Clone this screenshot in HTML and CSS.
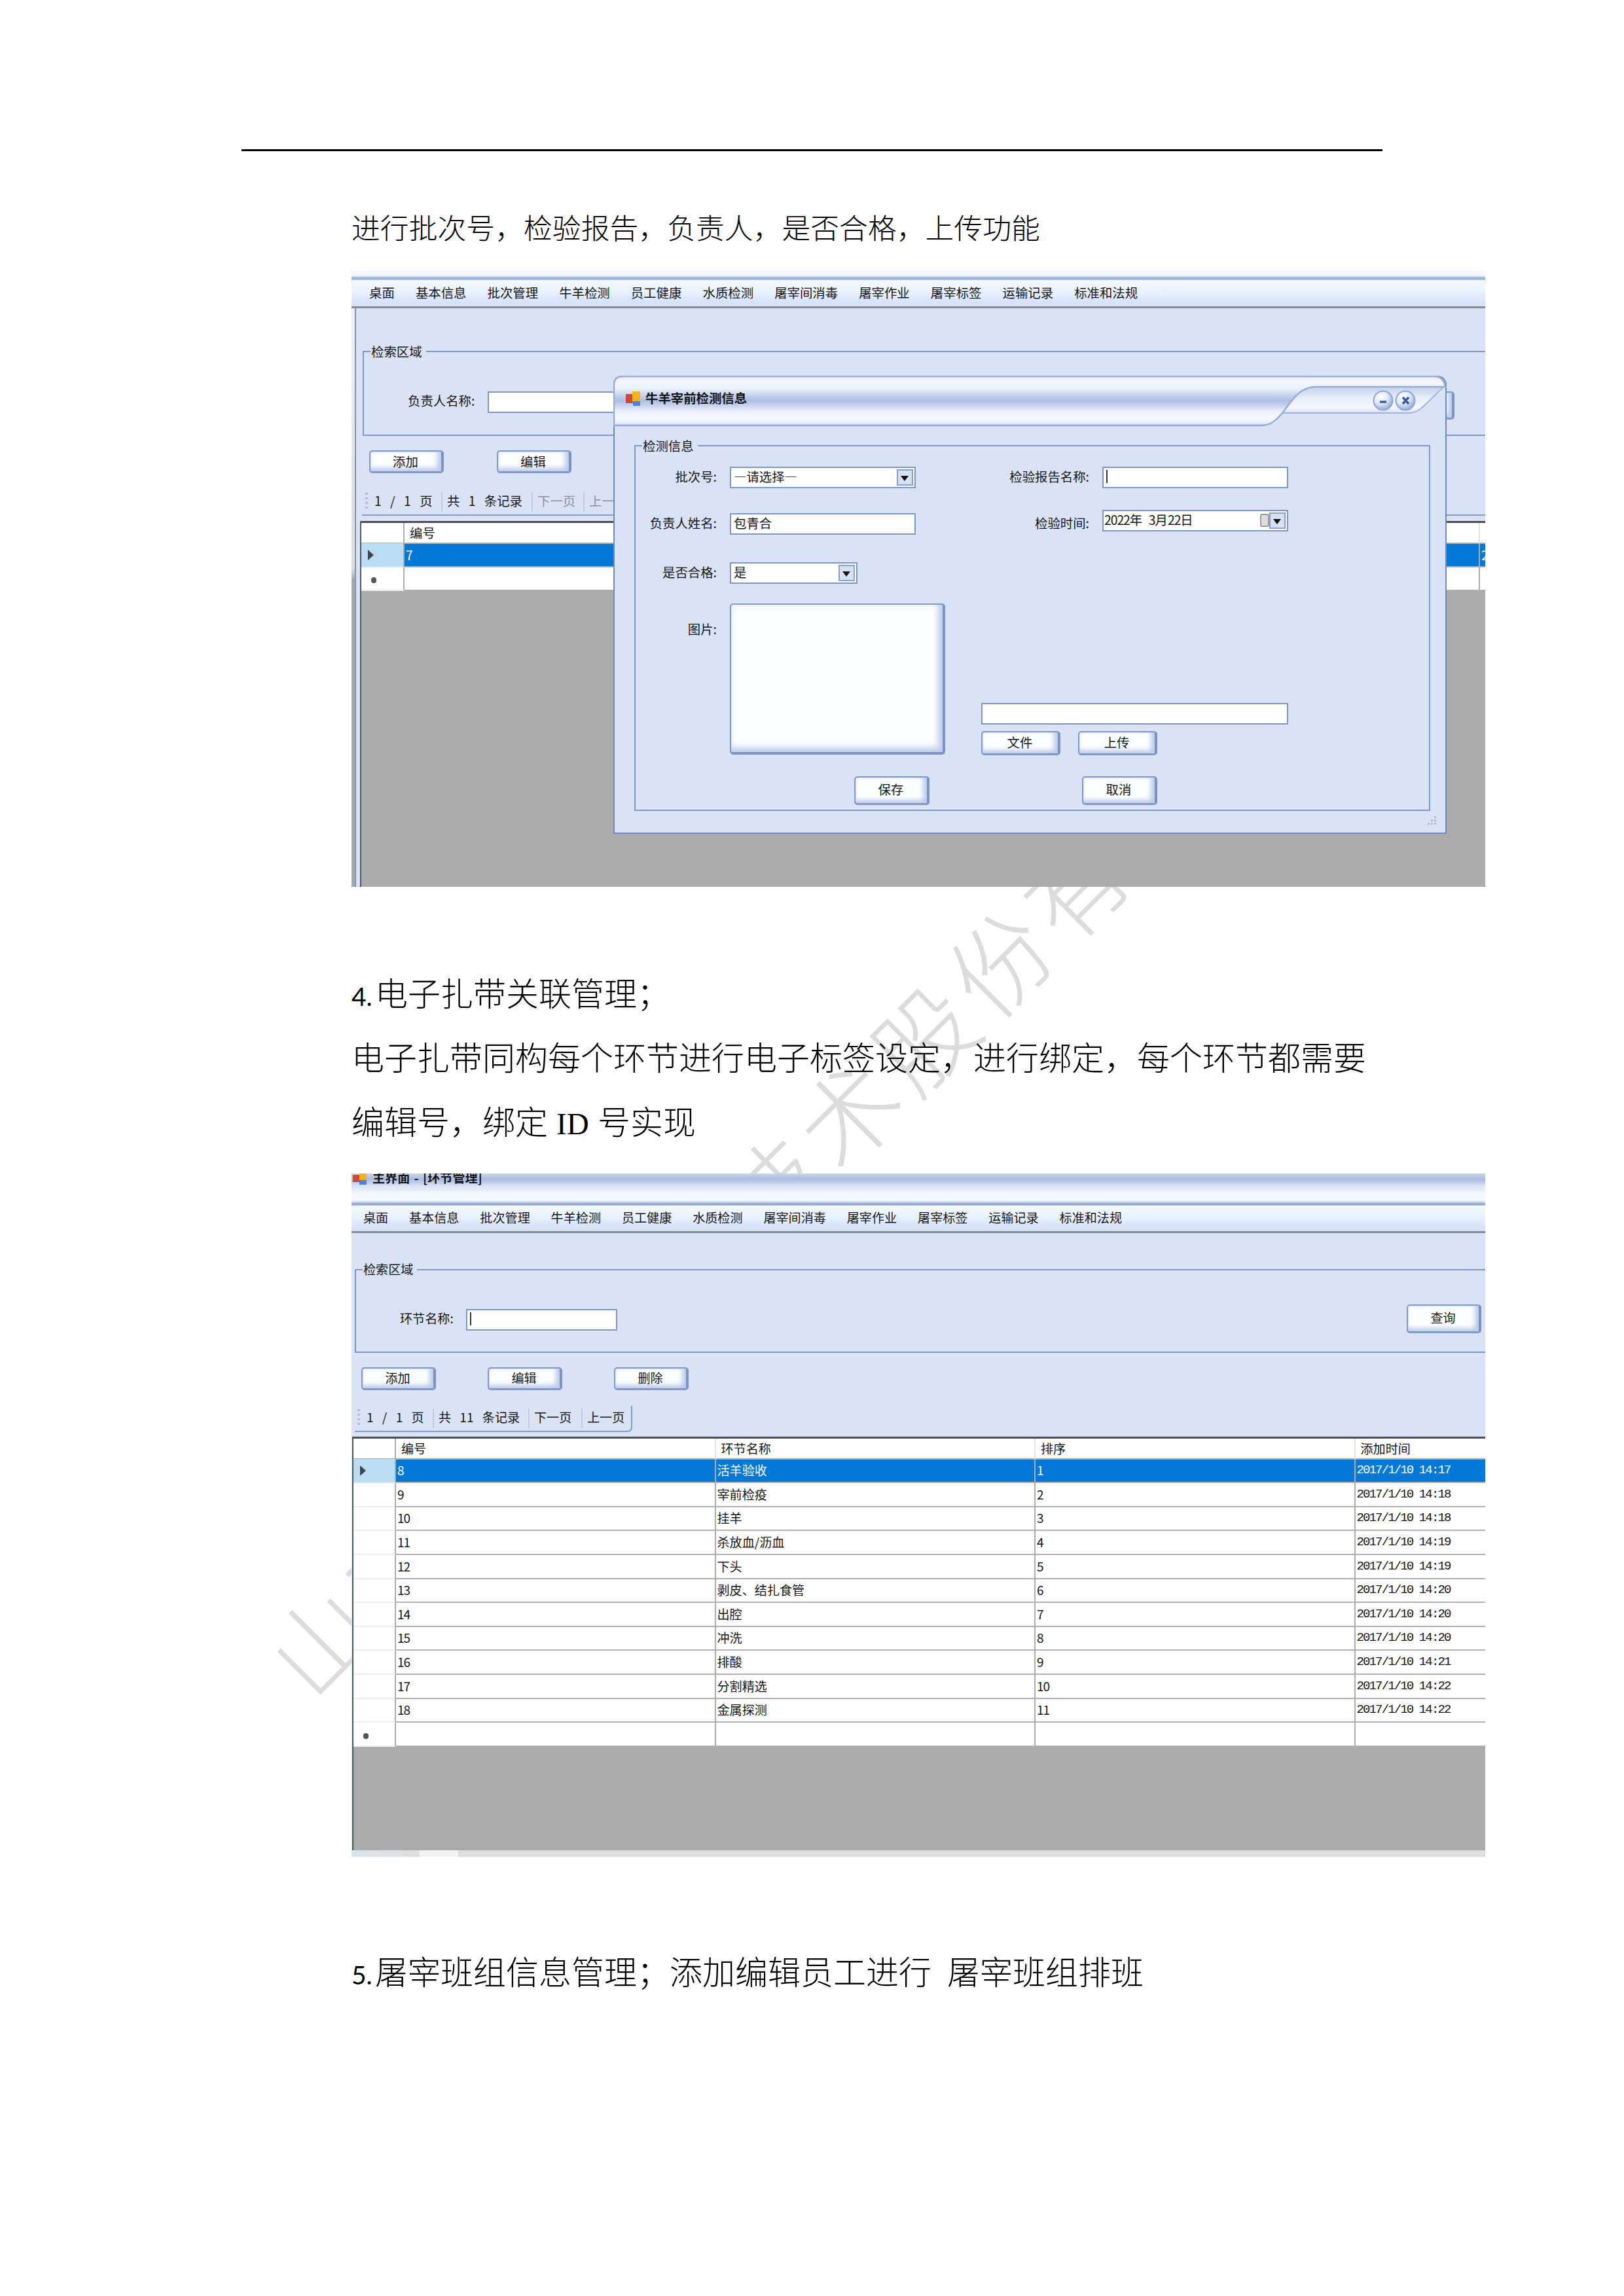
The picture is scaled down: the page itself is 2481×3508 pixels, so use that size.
FILE: index.html
```html
<!DOCTYPE html>
<html lang="zh-CN">
<head>
<meta charset="utf-8">
<title>检测与环节管理</title>
<link rel="stylesheet" href="styles.css">
</head>
<body>
<div class="watermark" aria-hidden="true"><span>山</span><span>东</span><span class="gap"></span><span>技</span><span>术</span><span>股</span><span>份</span><span>有</span></div>
<div class="rule"></div>
<main class="doc">
  <p class="small">进行批次号，检验报告，负责人，是否合格，上传功能</p>

  <section class="shot shot-a">
    <div class="topstrip"></div>
    <nav class="menu"><span>桌面</span><span>基本信息</span><span>批次管理</span><span>牛羊检测</span><span>员工健康</span><span>水质检测</span><span>屠宰间消毒</span><span>屠宰作业</span><span>屠宰标签</span><span>运输记录</span><span>标准和法规</span></nav>
    <div class="frame">
      <div class="edge"></div>
      <div class="work">
        <fieldset class="search">
          <legend>检索区域</legend>
          <div class="line"><span class="lab">负责人名称:</span><div class="input"></div><div class="btn query"></div></div>
        </fieldset>
        <div class="tools"><div class="btn">添加</div><div class="btn">编辑</div></div>
        <div class="pager"><i class="grip"></i><span class="p1">1 / 1 页</span><span class="p2">共 1 条记录</span><span class="p3 off">下一页</span><span class="p4 off">上一页</span></div>
        <div class="grid">
          <div class="row head"><b></b><span>编号</span><span></span></div>
          <div class="row sel"><b><svg width="9" height="16"><path d="M0 0L9 8L0 16Z" fill="#444"/></svg></b><span class="n">7</span><span class="n">2</span></div>
          <div class="row"><b><i class="dot"></i></b><span></span><span></span></div>
        </div>
      </div>
    </div>

    <div class="dialog">
      <svg class="titlebar" width="1273" height="78" viewBox="0 0 1273 78">
        <defs>
          <linearGradient id="bar" x1="0" y1="0" x2="0" y2="1">
            <stop offset="0" stop-color="#dfe7f6"/><stop offset=".08" stop-color="#f3f6fd"/><stop offset=".24" stop-color="#eef3fc"/>
            <stop offset=".38" stop-color="#c8d5ee"/><stop offset=".49" stop-color="#abbee4"/><stop offset=".58" stop-color="#c3d0ec"/>
            <stop offset=".7" stop-color="#e9eefa"/><stop offset=".85" stop-color="#f6f9fe"/><stop offset=".95" stop-color="#e9eef9"/><stop offset="1" stop-color="#c4d0ea"/>
          </linearGradient>
          <linearGradient id="pan" x1="0" y1="0" x2="0" y2="1">
            <stop offset="0" stop-color="#c3d1ec"/><stop offset=".4" stop-color="#e6ecf9"/><stop offset=".8" stop-color="#f5f8fe"/><stop offset="1" stop-color="#d5dff3"/>
          </linearGradient>
          <radialGradient id="orb" cx=".38" cy=".32" r=".72">
            <stop offset="0" stop-color="#fff"/><stop offset=".5" stop-color="#dfe8f7"/><stop offset="1" stop-color="#8fa8d4"/>
          </radialGradient>
        </defs>
        <path d="M1022 57H1216C1234 57 1246 36 1269 17H1073C1048 17 1036 39 1022 57Z" fill="url(#pan)" stroke="#a2b4db" stroke-width="2"/>
        <path d="M1 76V14Q1 1 14 1H1256Q1268 2 1271 17H1073C1048 17 1036 39 1022 57C1010 71 1003 76 989 76Z" fill="url(#bar)" stroke="#98acd6" stroke-width="2.5"/>
        <rect x="19" y="28" width="11" height="14" fill="#cf4a35"/><rect x="29" y="24" width="12" height="16" fill="#f2b21b"/><rect x="30" y="39" width="11" height="7" fill="#4d7fe0"/>
        <circle cx="1176" cy="38" r="14.500" fill="url(#orb)" stroke="#8ea6d2" stroke-width="2"/>
        <circle cx="1210" cy="38" r="14.500" fill="url(#orb)" stroke="#8ea6d2" stroke-width="2"/>
        <path d="M1171 40H1181M1206 33L1215 43M1215 33L1206 43" stroke="#3f5c96" stroke-width="3.500" fill="none"/>
      </svg>
      <div class="dtitle">牛羊宰前检测信息</div>
      <fieldset class="form">
        <legend>检测信息</legend>
        <div class="cols">
          <div class="left">
            <div class="field r1"><label>批次号:</label><div class="input select">—请选择—<i class="drop"></i></div></div>
            <div class="field r2"><label>负责人姓名:</label><div class="input">包青合</div></div>
            <div class="field r3"><label>是否合格:</label><div class="input select short">是<i class="drop"></i></div></div>
            <div class="field r4"><label>图片:</label><div class="picture"></div></div>
          </div>
          <div class="right">
            <div class="field r1"><label>检验报告名称:</label><div class="input"><i class="caret"></i></div></div>
            <div class="field r2"><label>检验时间:</label><div class="input select date"><span class="n">2022</span>年<span class="n gapl">3</span>月<span class="n">22</span>日<i class="cal"></i><i class="drop"></i></div></div>
            <div class="input file"></div>
            <div class="pair"><div class="btn">文件</div><div class="btn">上传</div></div>
          </div>
        </div>
        <div class="actions"><div class="btn">保存</div><div class="btn">取消</div></div>
      </fieldset>
      <svg class="sizer" width="14" height="14" fill="#b4b8c2"><path d="M10 0h3v3h-3zM5 5h3v3h-3zM10 5h3v3h-3zM0 10h3v3h-3zM5 10h3v3h-3zM10 10h3v3h-3z"/></svg>
    </div>
  </section>

  <div class="text">
    <p><span class="num">4.</span>电子扎带关联管理；</p>
    <p>电子扎带同构每个环节进行电子标签设定，进行绑定，每个环节都需要</p>
    <p>编辑号，绑定<span class="id">ID</span>号实现</p>
  </div>

  <section class="shot shot-b">
    <div class="caption">
      <svg width="22" height="18"><rect x="0" y="2" width="11" height="11" fill="#cf4a35"/><rect x="10" y="0" width="11" height="11" fill="#f2b21b"/><rect x="10" y="10" width="11" height="7" fill="#4d7fe0"/></svg>
      <span>主界面 - [环节管理]</span>
    </div>
    <nav class="menu"><span>桌面</span><span>基本信息</span><span>批次管理</span><span>牛羊检测</span><span>员工健康</span><span>水质检测</span><span>屠宰间消毒</span><span>屠宰作业</span><span>屠宰标签</span><span>运输记录</span><span>标准和法规</span></nav>
    <div class="frame">
      <div class="work">
        <fieldset class="search">
          <legend>检索区域</legend>
          <div class="line"><span class="lab">环节名称:</span><div class="input"><i class="caret"></i></div><div class="btn query">查询</div></div>
        </fieldset>
        <div class="tools"><div class="btn">添加</div><div class="btn">编辑</div><div class="btn">删除</div></div>
        <div class="pager"><i class="grip"></i><span class="p1">1 / 1 页</span><span class="p2">共 11 条记录</span><span class="p3">下一页</span><span class="p4">上一页</span></div>
        <div class="grid">
          <div class="row head"><b></b><span>编号</span><span>环节名称</span><span>排序</span><span>添加时间</span></div>
          <div class="row sel"><b><svg width="9" height="16"><path d="M0 0L9 8L0 16Z" fill="#444"/></svg></b><span class="n">8</span><span>活羊验收</span><span class="n">1</span><span class="t">2017/1/10 14:17</span></div>
          <div class="row"><b></b><span class="n">9</span><span>宰前检疫</span><span class="n">2</span><span class="t">2017/1/10 14:18</span></div>
          <div class="row"><b></b><span class="n">10</span><span>挂羊</span><span class="n">3</span><span class="t">2017/1/10 14:18</span></div>
          <div class="row"><b></b><span class="n">11</span><span>杀放血/沥血</span><span class="n">4</span><span class="t">2017/1/10 14:19</span></div>
          <div class="row"><b></b><span class="n">12</span><span>下头</span><span class="n">5</span><span class="t">2017/1/10 14:19</span></div>
          <div class="row"><b></b><span class="n">13</span><span>剥皮、结扎食管</span><span class="n">6</span><span class="t">2017/1/10 14:20</span></div>
          <div class="row"><b></b><span class="n">14</span><span>出腔</span><span class="n">7</span><span class="t">2017/1/10 14:20</span></div>
          <div class="row"><b></b><span class="n">15</span><span>冲洗</span><span class="n">8</span><span class="t">2017/1/10 14:20</span></div>
          <div class="row"><b></b><span class="n">16</span><span>排酸</span><span class="n">9</span><span class="t">2017/1/10 14:21</span></div>
          <div class="row"><b></b><span class="n">17</span><span>分割精选</span><span class="n">10</span><span class="t">2017/1/10 14:22</span></div>
          <div class="row"><b></b><span class="n">18</span><span>金属探测</span><span class="n">11</span><span class="t">2017/1/10 14:22</span></div>
          <div class="row"><b><i class="dot"></i></b><span></span><span></span><span></span><span></span></div>
        </div>
      </div>
    </div>
    <div class="taskbar"></div>
  </section>

  <div class="text last">
    <p><span class="num">5.</span>屠宰班组信息管理；添加编辑员工进行<span class="sp"></span>屠宰班组排班</p>
  </div>
</main>
</body>
</html>
```
FILE: styles.css
```css
* { box-sizing: border-box; }
html, body { margin: 0; background: #fff; }
body {
  position: relative;
  width: 2481px;
  height: 3508px;
  overflow: hidden;
  padding-top: 228px;
  color: #000;
  font-family: "Noto Sans CJK SC", "Liberation Sans", sans-serif;
}
p { margin: 0; white-space: nowrap; }
i { font-style: normal; }

.rule { width: 1743px; height: 3px; margin-left: 369px; background: #000; }
.doc { position: relative; width: 1732px; margin-left: 537px; }
.small { margin-top: 85px; font-size: 43.75px; line-height: 60px; font-weight: 300; letter-spacing: .08px; }
.text { margin-top: 111px; font-size: 50px; line-height: 98px; font-weight: 300; }
.text.last { margin-top: 124px; }
.num { display: inline-block; width: 36px; font: 400 39px/50px Lato, sans-serif; }
.id { display: inline-block; width: 50px; margin: 0 13px; font: 47px/50px "Liberation Serif", serif; }
.sp { display: inline-block; width: 24px; }

.watermark {
  position: absolute;
  left: 433px;
  top: 2467px;
  display: flex;
  height: 200px;
  transform: rotate(-45deg);
  transform-origin: 0 50%;
  color: #dcdcdc;
  font-size: 150px;
  line-height: 184px;
  font-weight: 300;
}
.watermark span { width: 163px; text-align: center; }
.watermark .gap { width: 652px; }

/* Application windows */
.shot {
  position: relative;
  display: flex;
  flex-direction: column;
  width: 1732px;
  overflow: hidden;
  background: #dae3f6;
  color: #151515;
  font-size: var(--u);
  line-height: 24px;
  white-space: nowrap;
}
.shot-a { --u: 19.4px; height: 942px; margin-top: 37px; }
.shot-b { --u: 19.1px; height: 1044px; margin-top: 33px; }

.topstrip { height: 15px; background: linear-gradient(#f4f7fb 0 8px, #c3d0e8 10px, #98add7 12px, #98add7 14px, #cfdcf2 15px); }
.menu {
  display: flex;
  gap: 32.1px;
  height: 40px;
  padding-left: 27px;
  line-height: 37px;
  background: linear-gradient(#f3f9ff, #e9f1fe 45%, #d8e4fb 80%, #d6e0f6);
}
.frame { display: flex; flex: 1; min-height: 0; border-top: 3px solid #858a94; }
.edge { width: 7px; border-right: 2px solid #8b93a3; background: linear-gradient(#efefef 0, #dcdcdc 45%, #a3a7ae 47%); }
.work { display: flex; flex: 1; flex-direction: column; min-width: 0; }

fieldset { min-width: 0; margin: 0; padding: 0 0 0 10px; border: 2px solid #7f96c6; }
legend { height: 24px; padding: 0 6px 0 1px; line-height: 23px; }
.search { height: 141px; margin: 54px -10px 0 10px; flex: none; }
.line { display: flex; padding-top: 49px; }
.lab { width: 122px; line-height: 28px; }
.input {
  position: relative;
  height: 33px;
  padding-left: 4px;
  border: 2px solid #7f97c6;
  background: #fff;
  line-height: 26px;
}
.caret { display: block; width: 2px; height: 20px; margin-top: 3px; background: #333; }
.btn {
  width: 114px;
  height: 35px;
  padding-right: 1px;
  border: 2px solid #8199c8;
  border-right: 4px solid #7c93c2;
  border-bottom-width: 3px;
  border-radius: 5px;
  background: #fdfeff;
  box-shadow: inset -6px -5px 7px #bccbe8, inset 1px 1px 3px #d9e2f4;
  line-height: 29px;
  text-align: center;
}
.tools { display: flex; gap: 81px; margin: 22px 0 0 20px; }

.pager { display: flex; align-items: center; height: 40px; margin: 25px 0 0 9px; border-bottom: 2px solid #8199cb; }
.grip { width: 4px; height: 28px; margin: 0 9px 0 5px; background: repeating-linear-gradient(#b3bccd 0 3px, transparent 3px 7px); }
.pager span { height: 30px; padding-left: 7px; border-left: 2px solid #c3cbdb; line-height: 26px; }
.pager .p1 { width: 103px; padding-left: 1px; border: 0; word-spacing: 9px; }
.pager .p2 { width: 138px; word-spacing: 9px; }
.pager .p3 { width: 79px; }
.pager .off { color: #8f8f95; }

.grid { flex: 1; margin: 8px 0 0 6px; border-top: 3px solid #484c52; border-left: 2px solid #50555e; background: #ababab; overflow: hidden; }
.row { display: grid; height: 36.65px; background: #fff; }
.row > * { border-right: 2px solid #acacac; border-bottom: 2px solid #b0b0b0; padding-left: 2px; line-height: 35px; font-weight: 400; }
.row b { display: flex; align-items: center; border-bottom-color: #ececec; padding-left: 10px; }
.row.head { height: 31px; }
.row.head > * { padding-left: 8px; line-height: 30px; border-right-color: #e4e4e4; }
.row.head b { border-bottom-color: #b0b0b0; border-right-color: #acacac; }
.row.sel { background: #0078d7; color: #fff; }
.row.sel b { background: #bcdcf3; border-bottom-color: #cfe4f4; }
.dot { width: 8px; height: 9px; margin-left: 5px; margin-top: 6px; border-radius: 4px; background: #555; }
.n { letter-spacing: -.055em; }
.gapl { margin-left: 9.7px; }

.shot-a .row { grid-template-columns: 66px 1643px 20px; }
.shot-a .query { height: 43px; width: 115px; margin-left: auto; margin-right: 55px; }
.shot-a .search .input { width: 230px; }
.shot-a .line { padding-left: 57px; }

/* Dialog over the first window */
.dialog {
  position: absolute;
  left: 400px;
  top: 161px;
  width: 1273px;
  height: 700px;
  border-radius: 14px 14px 0 0;
  background: #dae3f6;
  box-shadow: inset 0 0 0 2px #7189bd;
}
.titlebar { display: block; }
.dtitle { position: absolute; left: 49px; top: 22px; font-weight: 700; }
.form { width: 1216px; height: 570px; margin: 17px 0 0 32px; padding: 0; }
.form legend { margin-left: 10px; }
.cols { display: flex; }
.left { width: 528px; }
.field { display: flex; }
.field label { flex: none; width: 144px; padding-right: 20px; line-height: 29px; text-align: right; }
.field .input { width: 284px; }
.field .short { width: 195px; }
.left .r1 { margin-top: 20px; }
.left .r2 { margin-top: 38px; }
.left .r3 { margin-top: 42px; }
.left .r4 { margin-top: 30px; }
.r4 label { padding-top: 24px; }
.right .field label { width: 185px; }
.right .r1 { margin-top: 20px; }
.right .r2 { margin-top: 33px; }
.right .r2 label { padding-top: 5px; }
.picture {
  width: 329px;
  height: 231px;
  border: 2px solid #8199c8;
  border-right: 4px solid #7c93c2;
  border-bottom: 4px solid #7c93c2;
  border-radius: 5px;
  background: #fcfdff;
  box-shadow: inset -7px -7px 9px #c0ceea, inset 2px 2px 8px #e9eff9;
}
.drop { position: absolute; right: 2px; top: 2px; width: 25px; height: 25px; border: 2px solid #8ba0cb; background: #d6e1f5; }
.drop::after { content: ""; position: absolute; left: 4px; top: 8px; border: 6.5px solid transparent; border-top: 8px solid #111; border-bottom: 0; }
.input.date { padding-left: 1px; }
.cal { position: absolute; right: 27px; top: 4px; width: 14px; height: 20px; border: 2px solid #999; border-radius: 3px; background: #ddd; }
.input.file { width: 469px; margin-top: 261px; }
.pair { display: flex; gap: 27px; margin-top: 10px; }
.pair .btn { width: 121px; height: 37px; line-height: 30px; }
.actions { display: flex; gap: 233px; margin-top: 32px; padding-left: 334px; }
.actions .btn { width: 115px; height: 44px; line-height: 36px; }
.sizer { position: absolute; right: 15px; bottom: 13px; }

/* Second window */
.caption {
  display: flex;
  height: 49px;
  padding-left: 2px;
  font-weight: 700;
  background: linear-gradient(#c9d4e3 0, #a9bce3 9px, #b6c6e7 12px, #dbe4f4 19px, #f4f7fd 32px, #f4f7fd 41px, #c7d4ea 44px, #92a8d3 46px, #92a8d3 48px, #c8d8f0 49px);
}
.caption span { margin: -6px 0 0 8px; word-spacing: 2px; }
.shot-b .menu { gap: 31.9px; height: 39px; padding-left: 18px; }
.shot-b .search { margin: 44px -10px 0 5px; height: 139px; }
.shot-b .line { padding: 48px 14px 0 57px; }
.shot-b .lab { width: 101px; }
.shot-b .search .input { width: 231px; }
.shot-b .query { width: 114px; height: 44px; margin: -7px 0 0 auto; line-height: 36px; }
.shot-b .tools { gap: 79px; margin-left: 15px; }
.shot-b .pager { width: 424px; margin: 24px 0 0 5px; border-right: 2px solid #8199cb; border-bottom-right-radius: 7px; }
.shot-b .grip { margin-left: 4px; margin-right: 9px; }
.shot-b .p1 { width: 102px; }
.shot-b .p2 { width: 146px; }
.shot-b .p3 { width: 81px; }
.shot-b .grid { margin: 7px 0 0 1px; }
.shot-b .row { grid-template-columns: 65px 488.5px 488.5px 488.5px 240px; }
.t { font-family: "Liberation Mono", monospace; font-size: 19px; letter-spacing: -1.87px; }
.taskbar { height: 10px; background: linear-gradient(90deg, #d3e4ee 0, #dfe3e6 35px, #dedede 104px, #f2f2f2 104px, #f2f2f2 163px, #dedede 163px); }
```
